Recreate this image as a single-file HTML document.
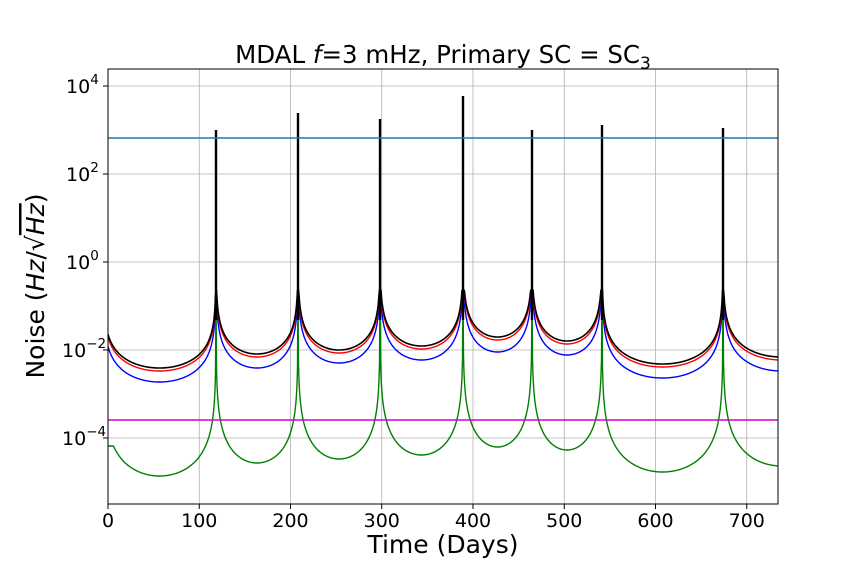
<!DOCTYPE html>
<html><head><meta charset="utf-8"><style>
body{margin:0;background:#fff;width:864px;height:576px;overflow:hidden;font-family:"Liberation Sans","DejaVu Sans",sans-serif}
svg text{font-family:"DejaVu Sans","Liberation Sans",sans-serif}
</style></head><body>
<svg id="s" width="864" height="576" xmlns="http://www.w3.org/2000/svg">
<rect width="864" height="576" fill="#fff"/>
<g id="grid" stroke="#b0b0b0" stroke-width="0.8"></g>
<g id="curves" fill="none" stroke-width="1.5" stroke-linejoin="round"></g>
<line x1="108" x2="778" y1="138" y2="138" stroke="#1f77b4" stroke-width="1.5"/>
<line x1="108" x2="778" y1="420" y2="420" stroke="#d000d0" stroke-width="1.5"/>
<rect x="108" y="69" width="670" height="435" fill="none" stroke="#000" stroke-width="1"/>
<g id="ticks" font-size="19" fill="#000"></g>
<text x="443" y="63" font-size="24.5" text-anchor="middle">MDAL <tspan font-style="italic">f</tspan>=3 mHz, Primary SC = SC<tspan font-size="17" dy="6">3</tspan></text>
<text x="443" y="553" font-size="25" text-anchor="middle">Time (Days)</text>
<text transform="translate(44,286) rotate(-90)" font-size="25" text-anchor="middle">Noise (<tspan font-style="italic">Hz</tspan>/√<tspan font-style="italic" text-decoration="overline">Hz</tspan>)</text>
</svg>
<script>
var ns="http://www.w3.org/2000/svg";
function el(p,t,a,txt){var e=document.createElementNS(ns,t);for(var k in a)e.setAttribute(k,a[k]);if(txt!==undefined)e.textContent=txt;p.appendChild(e);return e;}
var g=document.getElementById('grid'),tk=document.getElementById('ticks'),cv=document.getElementById('curves');
for(var d=0;d<=700;d+=100){var x=108+d*0.9125;el(g,'line',{x1:x,x2:x,y1:69,y2:504});el(tk,'line',{x1:x,x2:x,y1:504,y2:509,stroke:'#000'});el(tk,'text',{x:x,y:527,'text-anchor':'middle'},d);}
[4,2,0,-2,-4].forEach(function(p){var y=262-44*p;el(g,'line',{x1:108,x2:778,y1:y,y2:y});el(tk,'line',{x1:103,x2:108,y1:y,y2:y,stroke:'#000'});
var t=el(tk,'text',{x:(p<0?62:66),y:y+7,'text-anchor':'start'});t.textContent='10';var s=el(t,'tspan',{'font-size':'13.5',dy:'-9'});s.textContent=(p<0?'\u2212':'')+Math.abs(p);});
var sp=[103,216,298,380,463,532,602,723,840];
var curves={
 green:{c:'#008000',m:[476,463,459,455,447,450,472,466],pk:[300,290,290,285,290,290,300],k:24,st:446},
 blue:{c:'#0000ff',m:[382,368,363,360,352,355,378,371],pk:[285,270,275,270,275,275,285],k:18,st:345},
 red:{c:'#ff0000',m:[371,357,353,349,340,344,367,360],pk:[140,120,125,100,140,130,135],k:17,st:336},
 black:{c:'#000000',m:[368,354,350,346,337,341,364,357],pk:[130,113,119,96,130,125,128],k:17,st:330}
};
['green','blue','red','black'].forEach(function(n){var C=curves[n],pts=[];
for(var x=108;x<=778;x+=0.5){var i=0;while(sp[i+1]<x)i++;var a=sp[i],b=sp[i+1],u=(x-a)/(b-a);
var s=Math.sin(Math.PI*u);var y=C.m[i]-C.k*(-Math.log(Math.max(s,1e-9)));
if(i==0&&u<0.5)y=Math.max(y,C.st);
y=Math.max(y,290);pts.push(x.toFixed(1)+','+y.toFixed(1));}
el(cv,'polyline',{points:pts.join(' '),stroke:C.c,'stroke-width':n=='black'?1.6:1.4});
sp.slice(1,8).forEach(function(x,j){el(cv,'line',{x1:x,x2:x,y1:C.pk[j],y2:320,stroke:C.c,'stroke-width':n=='black'?2.4:1.4});});
});
</script>
</body></html>
